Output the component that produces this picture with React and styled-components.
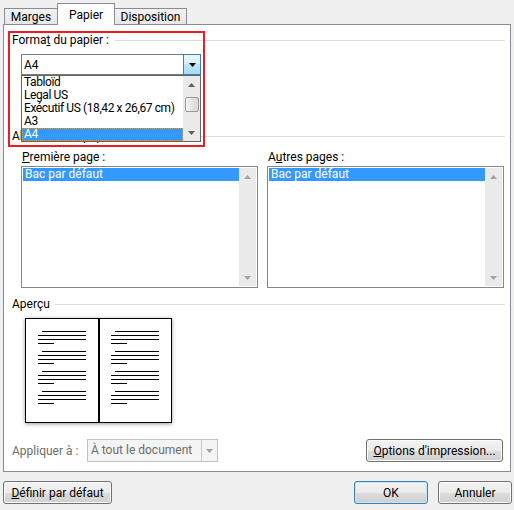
import React from 'react';
import styled, { createGlobalStyle } from 'styled-components';

const FONT = 'Roboto, "Liberation Sans", Arial, sans-serif';

const GlobalStyle = createGlobalStyle`
  html, body {
    margin: 0;
    padding: 0;
    background: #f0f0f0;
  }
  body {
    font-family: ${FONT};
    font-size: 12px;
    color: #000;
  }
  * {
    box-sizing: border-box;
  }
`;

const Dialog = styled.div`
  width: 514px;
  height: 510px;
  padding-top: 3px;
  display: flex;
  flex-direction: column;
`;

const TabBar = styled.div`
  position: relative;
  z-index: 1;
  display: flex;
  align-items: flex-end;
  height: 22px;
  margin-bottom: -1px;
  padding-left: 4px;
`;

const Tab = styled.div`
  width: ${p => p.$w}px;
  height: ${p => (p.$active ? 22 : 16)}px;
  margin-left: ${p => (p.$first ? 0 : -1)}px;
  margin-bottom: ${p => (p.$active ? 0 : 1)}px;
  padding-top: ${p => (p.$active ? 1 : 0)}px;
  border: 1px solid #898c95;
  border-bottom: none;
  background: ${p => (p.$active ? '#fff' : 'linear-gradient(#f3f3f3, #e6e6e6)')};
  display: flex;
  align-items: center;
  justify-content: center;
`;

const Panel = styled.div`
  position: relative;
  height: 448px;
  margin: 0 3px;
  padding: 8px 5px 9px 8px;
  border: 1px solid #898c95;
  background: #fff;
  display: flex;
  flex-direction: column;
`;

const GroupHeader = styled.div`
  display: flex;
  align-items: center;
  height: 15px;
  line-height: 15px;
  margin-top: ${p => p.$mt || 0}px;
  white-space: nowrap;

  &::after {
    content: '';
    flex: 1;
    height: 1px;
    margin-left: ${p => p.$gap || 6}px;
    background: #d5dfe5;
  }
`;

const Key = styled.span`
  text-decoration: underline;
`;

/* paper size combo, shown with its list dropped down */
const Combo = styled.div`
  position: relative;
  display: flex;
  width: 180px;
  height: 21px;
  margin: 6px 0 0 9px;
  border: 1px solid #7a7a7a;
  background: #fff;
`;

const ComboText = styled.div`
  flex: 1;
  padding-left: 2px;
  line-height: 20px;
`;

const ComboButton = styled.div`
  width: 18px;
  margin: -1px -1px -1px 0;
  border: 1px solid #3c7fb1;
  background: linear-gradient(#eaf6fd 0%, #d9f0fc 45%, #bee6fd 50%, #a7d9f5 100%);
  display: flex;
  align-items: center;
  justify-content: center;
`;

const DropList = styled.div`
  position: absolute;
  z-index: 2;
  top: calc(100% + 1px);
  left: -1px;
  width: 180px;
  height: 67px;
  border: 1px solid #646464;
  background: #fff;
  display: flex;
`;

const Items = styled.div`
  flex: 1;
  min-width: 0;
  display: flex;
  flex-direction: column;
`;

const Item = styled.div`
  height: 13px;
  line-height: 13px;
  padding-left: 2px;
  overflow: hidden;
  white-space: nowrap;
  letter-spacing: ${p => (p.$tight ? '-0.4px' : 'normal')};
  color: ${p => (p.$selected ? '#fff' : '#000')};
  background: ${p => (p.$selected ? '#3399ff' : 'transparent')};
  outline: ${p => (p.$focused ? '1px dotted #d89a4a' : 'none')};
  outline-offset: -1px;
`;

const ScrollBar = styled.div`
  width: 17px;
  background: #eaeaea;
  display: flex;
  flex-direction: column;
`;

const ScrollButton = styled.div`
  height: 17px;
  display: flex;
  align-items: center;
  justify-content: center;
`;

const ScrollTrack = styled.div`
  flex: 1;
  padding: 4px 0 0 2px;
`;

const Thumb = styled.div`
  width: 14px;
  height: 15px;
  border: 1px solid #9a9a9a;
  border-radius: 2px;
  background: linear-gradient(90deg, #f4f4f4, #e4e4e4 50%, #d8d8d8);
`;

const Columns = styled.div`
  display: flex;
  gap: 9px;
  margin: 6px 0 0 9px;
`;

const Column = styled.div`
  display: flex;
  flex-direction: column;
  gap: 1px;
`;

const FieldLabel = styled.div`
  height: 15px;
  line-height: 15px;
  padding-left: 1px;
`;

const ListBox = styled.div`
  display: flex;
  width: 237px;
  height: 122px;
  padding: 1px;
  border: 1px solid #828790;
  background: #fff;
`;

/* open book drawn in the preview box */
const Book = styled.div`
  display: flex;
  width: 147px;
  height: 105px;
  margin: 6px 0 0 13px;
  border: 1px solid #000;
  background: #fff;
  box-shadow: 0 1px 4px rgba(0, 0, 0, 0.4);
`;

const Page = styled.div`
  width: ${p => (p.$w ? `${p.$w}px` : 'auto')};
  flex: ${p => (p.$w ? 'none' : 1)};
  padding: 12px 0 0 ${p => p.$pad}px;

  & + & {
    border-left: 2px solid #000;
  }
`;

const Paragraph = styled.div`
  display: flex;
  flex-direction: column;
  gap: 3px;
  margin-top: ${p => (p.$first ? 0 : 7)}px;
`;

const TextLine = styled.div`
  width: ${p => p.$w}px;
  height: 1px;
  margin-left: ${p => p.$indent || 0}px;
  background: #000;
`;

const ApplyRow = styled.div`
  display: flex;
  align-items: center;
  height: 23px;
  margin-top: 16px;
`;

const DimLabel = styled.span`
  width: 75px;
  color: #6d6d6d;
`;

const DisabledCombo = styled.div`
  display: flex;
  width: 131px;
  height: 23px;
  border: 1px solid #c2c2c2;
  background: #f4f4f4;
  color: #6d6d6d;
`;

const DisabledText = styled.div`
  flex: 1;
  padding-left: 3px;
  line-height: 21px;
`;

const DisabledArrow = styled.div`
  width: 16px;
  border-left: 1px solid #c9c9c9;
  display: flex;
  align-items: center;
  justify-content: center;
`;

const Button = styled.button`
  width: ${p => p.$w}px;
  height: 23px;
  margin-left: ${p => (p.$push ? 'auto' : '0')};
  margin-right: ${p => p.$mr || 0}px;
  padding: 0;
  font-family: ${FONT};
  font-size: 12px;
  color: #000;
  border: 1px solid ${p => (p.$default ? '#3c7fb1' : '#707070')};
  border-radius: 3px;
  background: linear-gradient(#f2f2f2 0%, #ebebeb 50%, #dddddd 51%, #cfcfcf 100%);
  box-shadow: inset 0 0 0 1px ${p => (p.$default ? '#c4e5f6' : '#fcfcfc')};
`;

const Footer = styled.div`
  display: flex;
  gap: 10px;
  padding: 9px 2px 0 3px;
`;

const Highlight = styled.div`
  position: absolute;
  z-index: 3;
  top: 6px;
  left: 4px;
  width: 197px;
  height: 116px;
  border: 2px solid #ec1c24;
  pointer-events: none;
`;

const Arrow = ({ up, color = '#000' }) => (
  <svg width="7" height="4" viewBox="0 0 7 4">
    <polygon points={up ? '0,4 7,4 3.5,0' : '0,0 7,0 3.5,4'} fill={color} />
  </svg>
);

const Scroll = ({ color, thumb }) => (
  <ScrollBar>
    <ScrollButton>
      <Arrow up color={color} />
    </ScrollButton>
    <ScrollTrack>{thumb && <Thumb />}</ScrollTrack>
    <ScrollButton>
      <Arrow color={color} />
    </ScrollButton>
  </ScrollBar>
);

const paperSizes = ['Tabloïd', 'Legal US', 'Exécutif US (18,42 x 26,67 cm)', 'A3', 'A4'];

const TrayList = () => (
  <ListBox>
    <Items>
      <Item $selected>Bac par défaut</Item>
    </Items>
    <Scroll color="#a3a3a3" />
  </ListBox>
);

const BookPage = ({ w, pad }) => (
  <Page $w={w} $pad={pad}>
    {[0, 1, 2, 3].map(i => (
      <Paragraph key={i} $first={i === 0}>
        <TextLine $w={44} $indent={4} />
        <TextLine $w={48} />
        <TextLine $w={48} />
        <TextLine $w={16} />
      </Paragraph>
    ))}
  </Page>
);

export default function App() {
  return (
    <>
      <GlobalStyle />
      <Dialog>
        <TabBar>
          <Tab $w={54} $first>Marges</Tab>
          <Tab $w={58} $active>Papier</Tab>
          <Tab $w={73}>Disposition</Tab>
        </TabBar>

        <Panel>
          <GroupHeader>
            Forma<Key>t</Key>&nbsp;du papier :
          </GroupHeader>
          <Combo>
            <ComboText>A4</ComboText>
            <ComboButton>
              <Arrow />
            </ComboButton>
            <DropList>
              <Items>
                {paperSizes.map(size => (
                  <Item
                    key={size}
                    $tight
                    $selected={size === 'A4'}
                    $focused={size === 'A4'}
                  >
                    {size}
                  </Item>
                ))}
              </Items>
              <Scroll color="#606060" thumb />
            </DropList>
          </Combo>

          <GroupHeader $mt={54}>Alimentation papier :</GroupHeader>
          <Columns>
            <Column>
              <FieldLabel><Key>P</Key>remière page :</FieldLabel>
              <TrayList />
            </Column>
            <Column>
              <FieldLabel>A<Key>u</Key>tres pages :</FieldLabel>
              <TrayList />
            </Column>
          </Columns>

          <GroupHeader $mt={9} $gap={5}>Aperçu</GroupHeader>
          <Book>
            <BookPage w={72} pad={12} />
            <BookPage pad={11} />
          </Book>

          <ApplyRow>
            <DimLabel>Appliquer à :</DimLabel>
            <DisabledCombo>
              <DisabledText>À tout le document</DisabledText>
              <DisabledArrow>
                <Arrow color="#a0a0a0" />
              </DisabledArrow>
            </DisabledCombo>
            <Button $w={137} $push $mr={2}>
              <Key>O</Key>ptions d'impression...
            </Button>
          </ApplyRow>

          <Highlight />
        </Panel>

        <Footer>
          <Button $w={109}>
            <Key>D</Key>éfinir par défaut
          </Button>
          <Button $w={74} $push $default>OK</Button>
          <Button $w={74}>Annuler</Button>
        </Footer>
      </Dialog>
    </>
  );
}
